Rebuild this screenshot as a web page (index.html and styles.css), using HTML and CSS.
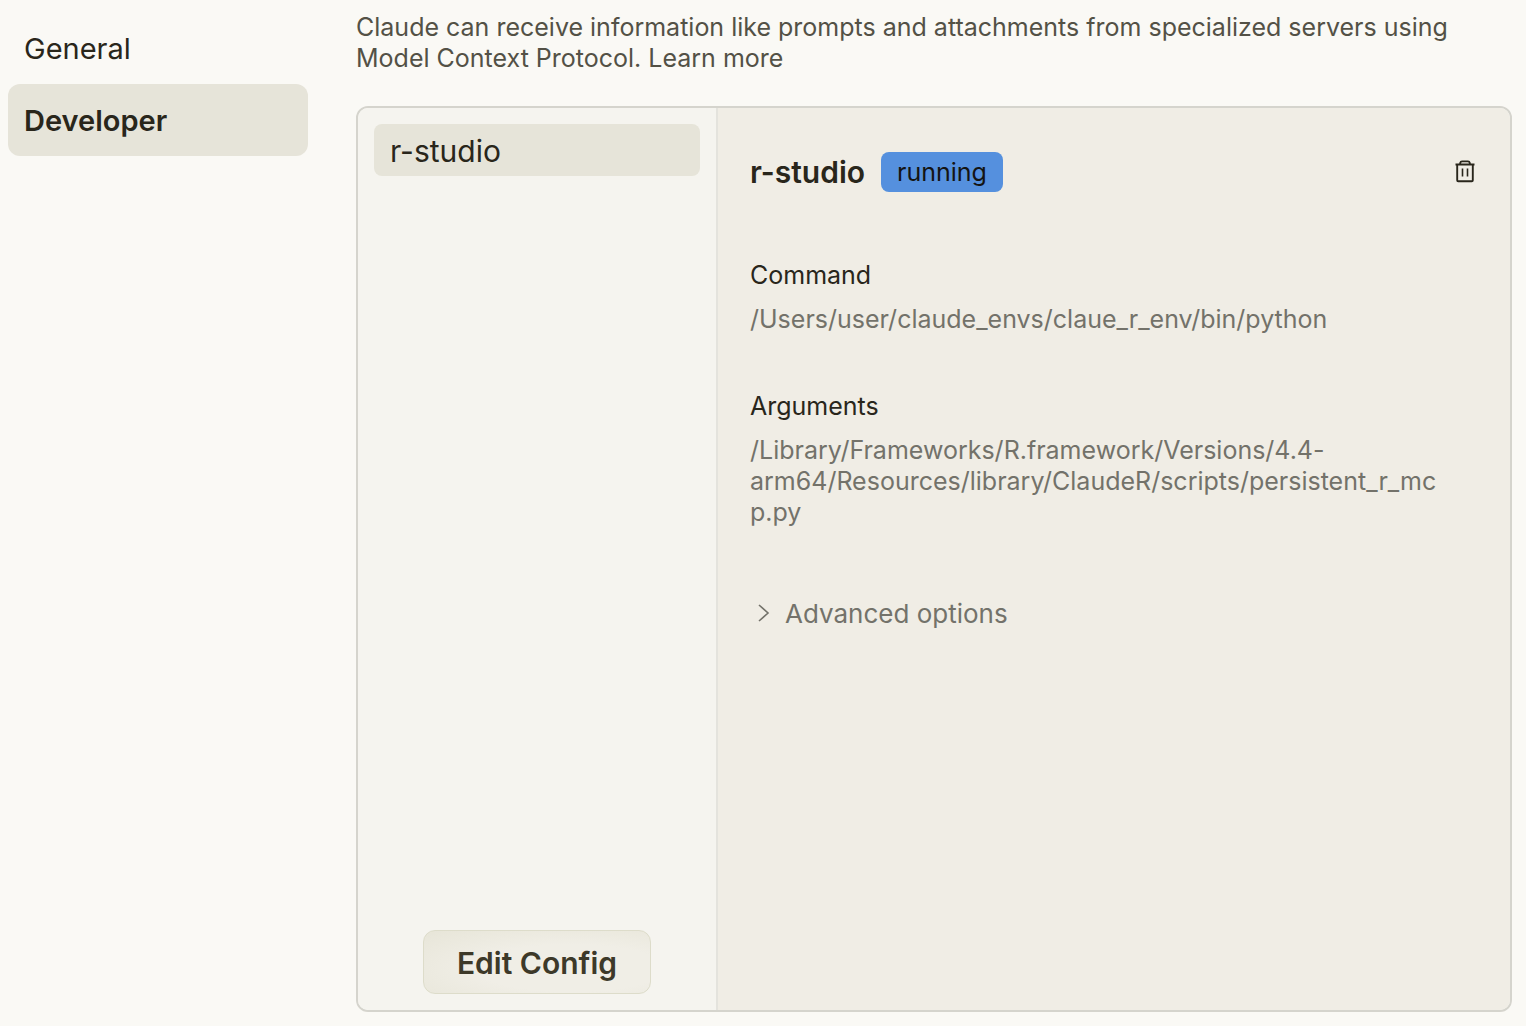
FILE: index.html
```html
<!DOCTYPE html>
<html lang="en">

<head>
    <meta charset="UTF-8">
    <meta name="viewport" content="width=device-width, initial-scale=1.0">
    <title>Settings</title>
    <link rel="stylesheet" href="styles.css">
</head>

<body>
    <div class="settings">
        <nav class="sidebar">
            <a href="#general">General</a>
            <a href="#developer" class="active">Developer</a>
        </nav>
        <main class="content">
            <p class="intro">Claude can receive information like prompts and attachments from specialized servers using Model Context Protocol. <a href="#learn">Learn more</a></p>
            <div class="panel">
                <div class="servers">
                    <button class="server">r-studio</button>
                    <button class="edit">Edit Config</button>
                </div>
                <section class="details">
                    <div class="heading">
                        <h2>r-studio</h2>
                        <span class="status">running</span>
                        <button class="delete" aria-label="Delete">
                            <svg width="22" height="24" viewBox="0 0 22 24" fill="none" stroke="currentColor" stroke-width="1.9" stroke-linejoin="round">
                                <path d="M1.5 4.5H20.5M3.2 4.5V20.2Q3.2 21.2 4.2 21.2H17.8Q18.8 21.2 18.8 20.2V4.5M6.2 4.5V3Q6.6 1.4 8 1.4H14Q15.4 1.4 15.8 3V4.5" />
                                <path d="M8.5 8.5V16.5M13.5 8.5V16.5" stroke-width="1.6" />
                            </svg>
                        </button>
                    </div>
                    <dl>
                        <dt>Command</dt>
                        <dd>/Users/user/claude_envs/claue_r_env/bin/python</dd>
                        <dt>Arguments</dt>
                        <dd>/Library/Frameworks/R.framework/Versions/4.4-arm64/Resources/library/ClaudeR/scripts/persistent_r_mc<wbr>p.py</dd>
                    </dl>
                    <button class="advanced">
                        <svg width="12" height="20" viewBox="0 0 12 20" fill="none" stroke="currentColor" stroke-width="1.6">
                            <path d="M1 1L10 9L1 17" />
                        </svg>
                        Advanced options
                    </button>
                </section>
            </div>
        </main>
    </div>
</body>

</html>
```

FILE: styles.css
```css
* {
    margin: 0;
    padding: 0;
    box-sizing: border-box;
}

body {
    background: #faf9f5;
    color: #29261b;
    font-family: Inter, "Noto Sans", sans-serif;
    font-size: 25px;
    line-height: 31px;
}

a {
    color: inherit;
    text-decoration: none;
}

button {
    border: none;
    background: none;
    color: inherit;
    font: inherit;
    cursor: pointer;
}

.settings {
    display: flex;
    gap: 48px;
    min-height: 100vh;
    padding: 12px 14px 14px 8px;
}

.sidebar {
    width: 300px;
    flex-shrink: 0;
}

.sidebar a {
    display: block;
    padding: 19px 16px 17px;
    border-radius: 12px;
    font-size: 29px;
    line-height: 36px;
}

.sidebar .active {
    background: #e6e4d9;
    font-weight: 600;
}

.content {
    flex: 1;
    min-width: 0;
    display: flex;
    flex-direction: column;
    gap: 32px;
}

.intro {
    color: #535146;
}

.panel {
    flex: 1;
    display: flex;
    border: 2px solid #d5d4cd;
    border-radius: 12px;
    overflow: hidden;
}

.servers {
    width: 360px;
    flex-shrink: 0;
    display: flex;
    flex-direction: column;
    justify-content: space-between;
    padding: 16px;
    background: #f5f4ef;
    border-right: 2px solid #e4e3dd;
}

.server {
    padding: 9px 16px 7px;
    background: #e6e4d9;
    border-radius: 8px;
    font-size: 30px;
    line-height: 36px;
    text-align: left;
}

.edit {
    align-self: center;
    padding: 14px 33px 12px;
    border: 1px solid #dddcca;
    border-radius: 12px;
    background: radial-gradient(ellipse at 65% 60%, #f0eee6 45%, #e7e5d8 100%);
    color: #3d3929;
    font-size: 30px;
    font-weight: 600;
    line-height: 36px;
}

.details {
    flex: 1;
    min-width: 0;
    padding: 44px 34px 32px 32px;
    background: #f0ede5;
}

.heading {
    display: flex;
    align-items: center;
    gap: 16px;
    margin-bottom: 68px;
}

.heading h2 {
    font-size: 30px;
    font-weight: 600;
    line-height: 40px;
}

.status {
    padding: 4px 16px;
    border-radius: 8px;
    background: #5590de;
    color: #141413;
    line-height: 32px;
}

.delete {
    display: flex;
    margin-left: auto;
}

dd {
    margin: 13px 0 56px;
    color: #73726a;
    overflow-wrap: anywhere;
}

.advanced {
    display: flex;
    align-items: center;
    gap: 15px;
    margin-top: 68px;
    padding-left: 8px;
    color: #73726a;
    font-size: 26px;
    line-height: 36px;
}
```
